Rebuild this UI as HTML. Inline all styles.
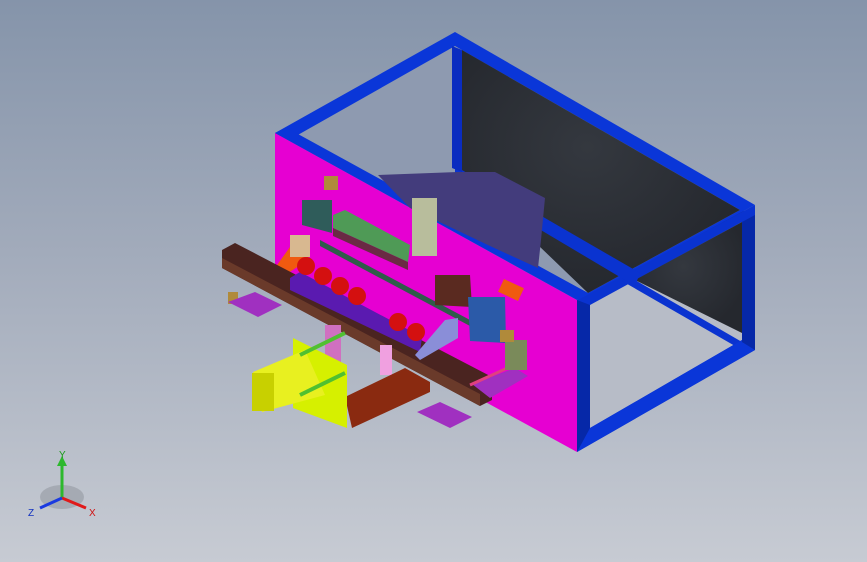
<!DOCTYPE html><html><head><style>html,body{margin:0;padding:0;overflow:hidden}body{width:867px;height:562px;background:linear-gradient(180deg,#8594aa 0%,#a2abbb 45%,#c7cbd3 100%)}</style></head><body>
<svg width="867" height="562" viewBox="0 0 867 562" xmlns="http://www.w3.org/2000/svg" style="display:block">
<defs><radialGradient id="sh" cx="0.45" cy="0.4" r="0.6"><stop offset="0" stop-color="#34383f"/><stop offset="1" stop-color="#25282e"/></radialGradient></defs>
<!-- dark back wall -->
<polygon points="462,50 745,212 745,338 462,168" fill="url(#sh)"/>
<!-- back bottom rail -->
<polygon points="455,166 745,334 745,347 455,179" fill="#0a33d0"/>
<polygon points="455,172 745,340 745,347 455,179" fill="#0628a8"/>
<!-- right side frame -->
<polygon points="577,300 755,205 755,350 577,452" fill="#0a33d0"/>
<polygon points="590,305 742,222 742,340 590,428" fill="#b7bcc7"/>
<polygon points="635,280 742,222 742,333" fill="url(#sh)"/>
<polygon points="628,276 742,342 742,350 622,281" fill="#0a33d0"/>
<polygon points="590,428 742,340 755,350 577,452" fill="#0a36d8"/>
<polygon points="742,222 755,215 755,350 742,342" fill="#0628a8"/>
<polygon points="577,300 590,305 590,428 577,452" fill="#0628a8"/>
<!-- top frame ring -->
<polygon points="275,133 455,32 755,205 578,300" fill="#0a36d8"/>
<polygon points="296,136 455,46 740,210 588,293" fill="#8e9ab0"/>
<polygon points="462,50 740,210 588,293 462,172" fill="url(#sh)"/>
<polygon points="455,166 640,273 635,286 455,179" fill="#0a33d0"/>
<polygon points="452,46 462,50 462,172 452,168" fill="#0a2cc0"/>
<!-- magenta panel -->
<polygon points="275,133 577,300 577,452 275,287" fill="#e600d2"/>
<polygon points="275,133 577,300 588,293 287,128" fill="#0a36d8"/>
<!-- hood -->
<polygon points="378,175 458,172 495,172 545,198 541,240 538,268 490,246 410,208" fill="#433c7c"/>
<!-- mechanism top -->
<rect x="324" y="176" width="14" height="14" fill="#b08a3a"/>
<polygon points="302,200 332,200 332,233 302,225" fill="#2f5c5a"/>
<polygon points="333,215 345,210 410,245 408,262 333,228" fill="#4f9a56"/>
<polygon points="333,228 408,262 408,270 333,236" fill="#6a2a44"/>
<polygon points="320,240 470,320 470,326 320,246" fill="#2f5c4a"/>
<rect x="412" y="198" width="25" height="58" fill="#b8bd9c"/>
<polygon points="272,272 295,240 308,236 308,260 285,275" fill="#f05a10"/>
<rect x="290" y="235" width="20" height="22" fill="#d8b890"/>
<!-- brown rail -->
<polygon points="222,250 235,243 492,377 492,400 480,406 222,268" fill="#4a2420"/>
<polygon points="222,258 480,394 480,406 222,268" fill="#6a3a2a"/>
<!-- purple bar -->
<polygon points="290,278 300,272 422,337 420,352 290,290" fill="#5a1ab0"/>
<g fill="#d41010"><circle cx="306" cy="266" r="9"/><circle cx="323" cy="276" r="9"/><circle cx="340" cy="286" r="9"/><circle cx="357" cy="296" r="9"/><circle cx="398" cy="322" r="9"/><circle cx="416" cy="332" r="9"/></g>
<polygon points="435,275 470,275 472,307 435,305" fill="#5a2a20"/>
<polygon points="468,297 505,297 506,343 470,341" fill="#2b5aa8"/>
<rect x="500" y="283" width="22" height="14" fill="#f05a10" transform="rotate(25 511 290)"/>
<polygon points="415,355 445,320 458,318 458,338 420,360" fill="#8a8ed8"/>
<rect x="228" y="292" width="10" height="12" fill="#b08a3a"/>
<!-- lower -->
<rect x="325" y="325" width="16" height="40" fill="#d070c0"/>
<rect x="380" y="345" width="12" height="30" fill="#f0a0e0"/>
<polygon points="345,397 405,368 430,382 430,392 352,428" fill="#8a2a10"/>
<polygon points="293,338 347,365 347,428 293,408" fill="#d6f000"/>
<polygon points="253,372 305,350 325,395 262,412" fill="#e8f020"/>
<rect x="252" y="373" width="22" height="38" fill="#c8d000"/>
<line x1="300" y1="355" x2="345" y2="333" stroke="#50c030" stroke-width="4"/>
<line x1="300" y1="395" x2="345" y2="373" stroke="#50c030" stroke-width="4"/>
<polygon points="228,302 255,292 282,305 258,317" fill="#a030c0"/>
<polygon points="417,412 440,402 472,417 450,428" fill="#a030c0"/>
<polygon points="472,384 515,368 528,376 490,398" fill="#a030c0"/>
<line x1="470" y1="385" x2="525" y2="360" stroke="#e04080" stroke-width="3"/>
<rect x="505" y="340" width="22" height="30" fill="#7a8a5a"/>
<rect x="500" y="330" width="14" height="12" fill="#b08a3a"/>
<!-- axis triad -->
<ellipse cx="62" cy="497" rx="22" ry="12" fill="#9aa0a8" opacity="0.7"/>
<line x1="62" y1="498" x2="62" y2="462" stroke="#2db82d" stroke-width="3"/>
<polygon points="57,466 67,466 62,456" fill="#2db82d"/>
<line x1="62" y1="498" x2="86" y2="508" stroke="#e01a1a" stroke-width="3"/>
<line x1="62" y1="498" x2="40" y2="508" stroke="#1a3ae0" stroke-width="3"/>
<text x="59" y="458" font-family="Liberation Sans,sans-serif" font-size="10" fill="#1a9a1a">Y</text>
<text x="89" y="516" font-family="Liberation Sans,sans-serif" font-size="10" fill="#d01010">X</text>
<text x="28" y="516" font-family="Liberation Sans,sans-serif" font-size="10" fill="#1030c0">Z</text>
</svg></body></html>
